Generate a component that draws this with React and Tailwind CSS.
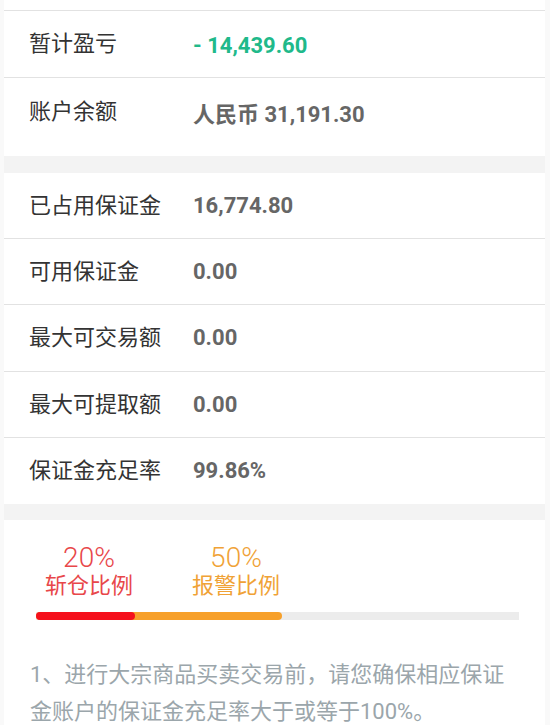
const rows2 = [
  { label: "已占用保证金", value: "16,774.80", h: "h-[66px]" },
  { label: "可用保证金", value: "0.00", h: "h-[66px]" },
  { label: "最大可交易额", value: "0.00", h: "h-[67px]" },
  { label: "最大可提取额", value: "0.00", h: "h-[66px]" },
  { label: "保证金充足率", value: "99.86%", h: "h-[66px]", last: true },
];

function Row({ label, value, h, last, valueClass = "text-[#666]" }) {
  return (
    <div className={`flex items-center pl-[25px] ${h} ${last ? "" : "border-b border-[#e2e2e2]"}`}>
      <span className="w-[164px] text-[22px] leading-[30px] text-[#333]">{label}</span>
      <span className={`text-[22px] leading-[30px] font-bold ${valueClass}`}>{value}</span>
    </div>
  );
}

export default function App() {
  return (
    <div className="w-[550px] h-[725px] overflow-hidden bg-[#f9f9f9] font-['Roboto','Noto_Sans_CJK_SC',sans-serif]">
      <div className="ml-[4px] w-[541px] bg-white">
        {/* 账户概况 */}
        <div className="h-[11px] border-b border-[#e2e2e2]"></div>
        <div className="flex items-center pl-[25px] h-[67px] border-b border-[#e2e2e2]">
          <span className="w-[164px] text-[22px] leading-[30px] text-[#333]">暂计盈亏</span>
          <span className="text-[22px] leading-[30px] font-bold text-[#20b98a] mt-[3px]">- 14,439.60</span>
        </div>
        <div className="flex items-center pl-[25px] h-[78px] pb-[10px]">
          <span className="w-[164px] text-[22px] leading-[30px] text-[#333]">账户余额</span>
          <span className="text-[22px] leading-[30px] font-bold text-[#666] mt-[5px]">人民币 31,191.30</span>
        </div>

        <div className="h-[17px] bg-[#f3f3f3]"></div>

        {/* 保证金 */}
        {rows2.map((r) => (
          <Row key={r.label} {...r} />
        ))}

        <div className="h-[16px] bg-[#f3f3f3]"></div>

        {/* 比例 */}
        <div className="pt-[24px] h-[206px]">
          <div className="flex pl-[39px] gap-[55px]">
            <div className="w-[92px] flex flex-col items-center">
              <span className="text-[28px] leading-[28px] font-light text-[#e8474a]">20%</span>
              <span className="mt-[1px] text-[22px] leading-[26px] text-[#e8474a]">斩仓比例</span>
            </div>
            <div className="w-[92px] flex flex-col items-center">
              <span className="text-[28px] leading-[28px] font-light text-[#f0a236]">50%</span>
              <span className="mt-[1px] text-[22px] leading-[26px] text-[#f0a236]">报警比例</span>
            </div>
          </div>

          <div className="mt-[13px] ml-[32px] w-[483px] h-[8px] bg-[#ececec] relative">
            <div className="absolute left-0 top-0 h-full w-[246px] rounded-full bg-[#f7a02a]"></div>
            <div className="absolute left-0 top-0 h-full w-[99px] rounded-full bg-[#f5101c]"></div>
          </div>

          <p className="mt-[36px] pl-[26px] pr-[30px] text-[22px] leading-[37px] text-[#9ba6ab]">
            1、进行大宗商品买卖交易前，请您确保相应保证金账户的保证金充足率大于或等于100%。
          </p>
        </div>
      </div>
    </div>
  );
}
